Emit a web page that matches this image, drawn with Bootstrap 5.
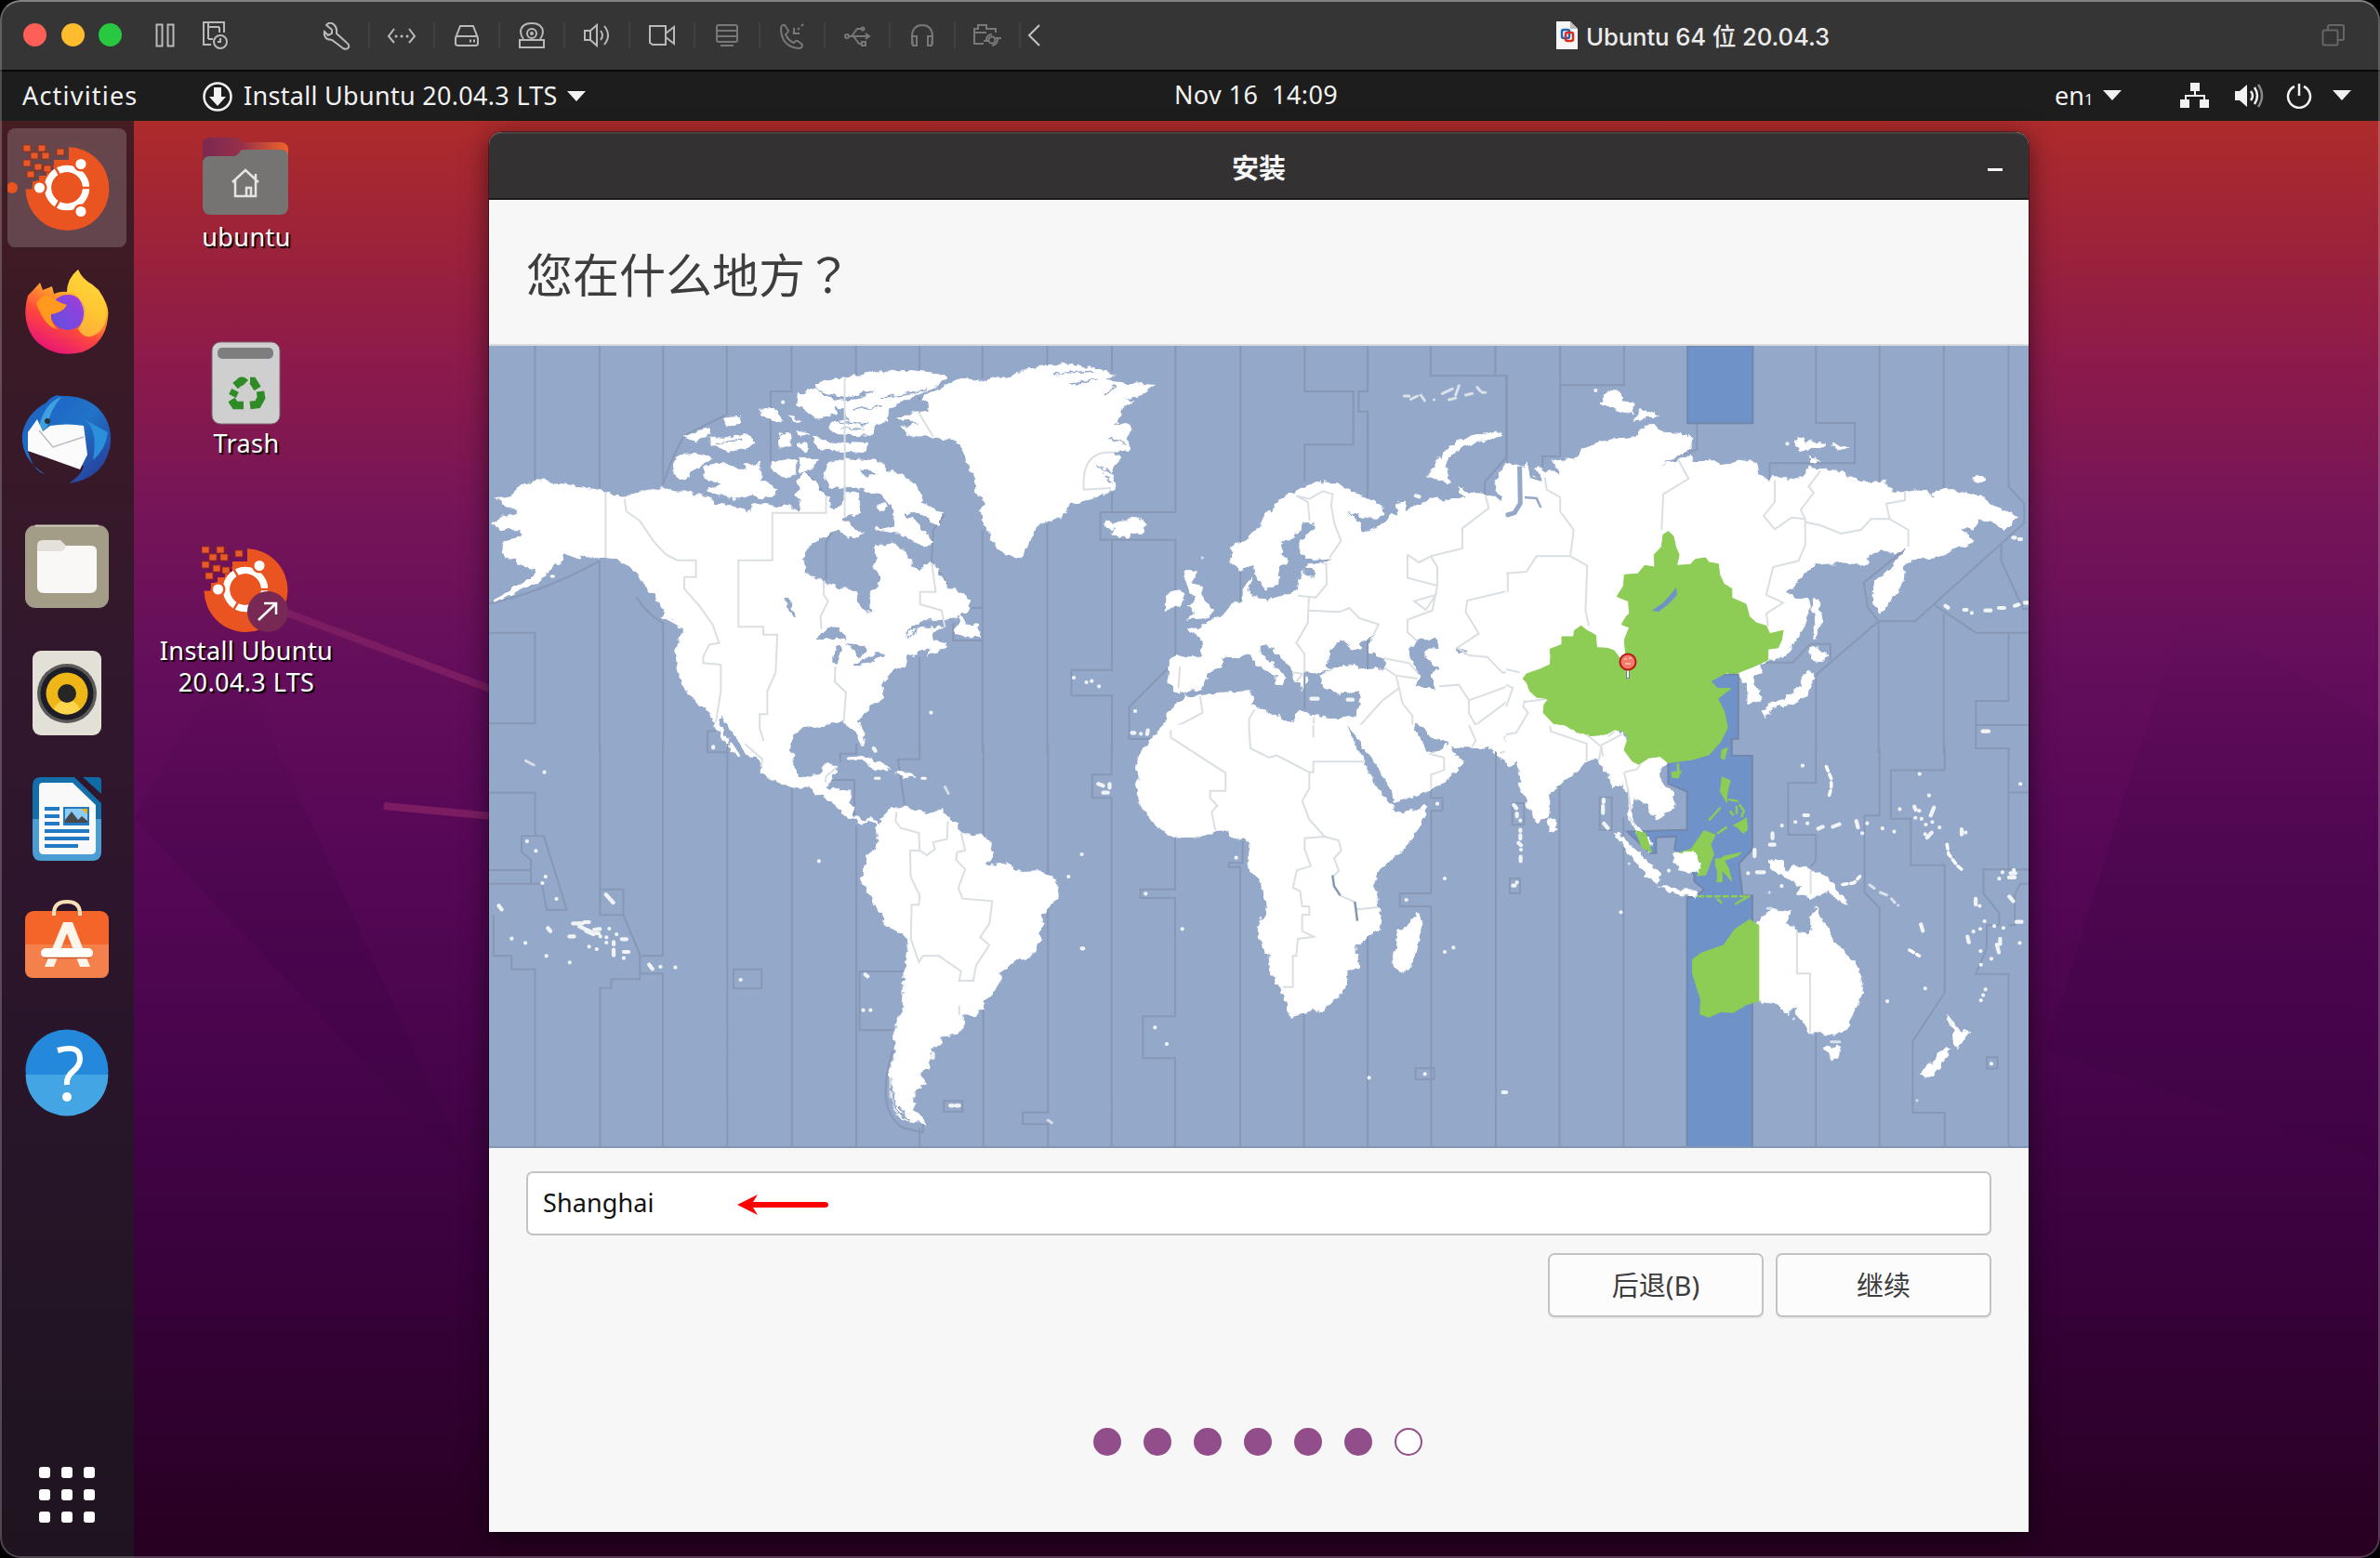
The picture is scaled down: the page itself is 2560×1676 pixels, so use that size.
<!DOCTYPE html>
<html lang="zh-CN">
<head>
<meta charset="utf-8">
<title>Ubuntu 64 位 20.04.3</title>
<link href="https://cdn.jsdelivr.net/npm/bootstrap@5.3.0/dist/css/bootstrap.min.css" rel="stylesheet">
<script src="https://cdn.jsdelivr.net/npm/bootstrap@5.3.0/dist/js/bootstrap.bundle.min.js"></script>
<style>
  html,body{width:2560px;height:1676px;margin:0;overflow:hidden;background:#000}
  body{font-family:"Noto Sans","Noto Sans CJK SC",sans-serif;font-size:27px;line-height:1.2}
  svg{display:block;flex:none}
  .vm{width:2560px;height:1676px;border-radius:22px;background:#1d1d1d}
  .vm-edge{inset:0;border-radius:22px;border:2px solid rgba(255,255,255,.22);border-top-color:#828282;pointer-events:none;z-index:20}
  .mac-bar{height:77px;background:#353535;border-bottom:2px solid #090909;padding-left:25px;padding-right:37px}
  .light{width:25px;height:25px;border-radius:50%}
  .tool{width:70px;height:28px;color:#b9b9b9;border-right:2px solid #414141}
  .tool.off{color:#787878}
  .mac-title{font:500 25.7px Inter,"Noto Sans CJK SC",sans-serif;color:#ebebeb;white-space:pre;letter-spacing:-.1px}
  .stroked{fill:none;stroke:currentColor;stroke-width:2}
  .gnome{height:53px;background:#1d1d1d;color:#f2f2f2;white-space:pre}
  .desk{height:1546px}
  .dock{width:144px;padding:8px 8px 0;gap:7.700px;background:linear-gradient(#451c22 0,#3a1a26 15%,#33182c 35%,#2e162d 50%,#28152a 66%,#1e141f 100%)}
  .dock-item{width:128px;height:128px;border-radius:8px}
  .dock-item.on{background:rgba(255,255,255,.19)}
  .desk-item{width:240px;height:222px;color:#fff;text-shadow:2px 2px 1px #000;font-size:27px;line-height:34px;letter-spacing:.4px}
  .installer{left:526px;top:12px;width:1656px;height:1506px;background:#f7f7f7;border-radius:14px 14px 0 0;box-shadow:0 0 0 1px rgba(0,0,0,.3),0 6px 28px rgba(0,0,0,.55)}
  .dlg-bar{height:73px;background:#333132;border-top:2px solid #454344;border-bottom:2px solid #1c1b1b;border-radius:14px 14px 0 0;color:#f7f7f7;font:700 29px "Noto Sans CJK SC",sans-serif}
  .dlg-head{height:157px;border-bottom:2px solid #dcdcdc;padding-left:40px;font:400 50px/1 "Noto Sans CJK SC",sans-serif;color:#3d3d3d}
  .qmark{font-family:"Noto Sans CJK TC",sans-serif}
  .city{height:69px;border:2px solid #c3c3c3;border-radius:7px;color:#111;font-size:27px;padding:0 16px;background:#fff}
  .dlg-btn{width:232px;height:69px;border:2px solid #c3c3c3;border-radius:7px;background:#fcfcfc;color:#3d3d3d;font:400 29px "Noto Sans","Noto Sans CJK SC",sans-serif;box-shadow:0 2px 0 #ececec;padding:0 0 3px}
  .step{width:30px;height:30px;border-radius:50%;background:#924d8b;border:2px solid #924d8b}
  .step.todo{background:#fff}
  .map path,.map polygon{vector-effect:non-scaling-stroke}
  .land{fill:#fff;stroke:#fff;stroke-width:.8;filter:url(#coast)}
  .sea{fill:#94a8c9;stroke:none;filter:url(#coast)}
  .hot{fill:#6f93c8;stroke:#7186ab;stroke-width:2}
  .sel{fill:#8dcd56;stroke:#8dcd56;stroke-width:1}
  .zl{fill:none;stroke:#8698b5;stroke-width:2}
  .bl{fill:none;stroke:#d9dfe2;stroke-width:2}
  .isl{fill:none;stroke:#f1f4f5;stroke-width:4.2;stroke-linecap:round}
  .thin{fill:none;stroke:#fff;stroke-width:3;stroke-linecap:round;stroke-linejoin:round}
</style>
</head>
<body>
<main class="vm position-relative overflow-hidden d-flex flex-column">
  <div class="vm-edge position-absolute"></div>

  <!-- virtual machine window bar -->
  <header class="mac-bar d-flex align-items-center position-relative flex-shrink-0">
    <div class="d-flex" style="gap:15.5px">
      <span class="light" style="background:#ff5f57"></span><span class="light" style="background:#febc2e"></span><span class="light" style="background:#28c840"></span>
    </div>
    <svg class="stroked" style="color:#b9b9b9;margin-left:36px" width="22" height="26"><rect x="1.500" y="1.500" width="6" height="23"/><rect x="13.500" y="1.500" width="6" height="23"/></svg>
    <svg class="stroked" style="color:#b9b9b9;margin-left:28px" width="30" height="32"><path d="M10 26H2V2H24V13M7 2V20M7 7H19M19 7V13M7 20H12"/><circle cx="20" cy="23" r="7"/><path d="M20 19V23H17"/></svg>
    <div class="d-flex align-items-center" style="margin-left:81px">
      <div class="tool d-flex justify-content-center"><svg class="stroked" width="30" height="30"><path d="M4 3 L10 8 V12 L6 14 L2 10 Q1 15 5 18 L10 19 L22 28 Q26 30 28 27 Q29 24 26 22 L15 12 Q16 4 10 1 Q6 0 4 3Z"/></svg></div>
      <div class="tool d-flex justify-content-center"><svg class="stroked" width="32" height="28"><path d="M8 7 L2 15 L8 22 M24 7 L30 15 L24 22"/><path d="M10 15h.1M16 15h.1M22 15h.1" stroke-linecap="round" stroke-width="3"/></svg></div>
      <div class="tool d-flex justify-content-center"><svg class="stroked" width="28" height="28"><path d="M7 4H21L26 17V23Q26 25 23 25H5Q2 25 2 23V17Z M2 17Q2 15 5 15H23Q26 15 26 17"/><path d="M17 20h2M21 20h2" stroke-width="3"/></svg></div>
      <div class="tool d-flex justify-content-center"><svg class="stroked" width="30" height="30"><path d="M6 18Q3 14 3 10Q4 1 15 1Q26 1 27 10Q27 14 24 18M2 19H28V27H2Z"/><circle cx="15" cy="12" r="5"/><circle cx="15" cy="12" r="1"/></svg></div>
      <div class="tool d-flex justify-content-center"><svg class="stroked" width="30" height="28"><path d="M2 9H8L15 3V25L8 19H2ZM8 9V19M19 9Q23 14 19 19M23 4Q31 14 23 24"/></svg></div>
      <div class="tool d-flex justify-content-center"><svg class="stroked" width="30" height="28"><path d="M2 4H19V24H5L2 22ZM19 12L28 5V23L19 16"/></svg></div>
      <div class="tool off d-flex justify-content-center"><svg class="stroked" width="28" height="28"><rect x="3" y="3" width="22" height="18" rx="2"/><path d="M3 9H25M3 15H25M7 25H21"/></svg></div>
      <div class="tool off d-flex justify-content-center"><svg class="stroked" width="30" height="30"><path d="M3 6Q4 2 7 3L11 9Q11 11 8 13Q11 20 17 22Q19 19 21 20L26 24Q26 28 22 28Q3 26 3 6ZM16 12L18 10M21 8L23 6M25 4L27 2M17 6V12H23"/></svg></div>
      <div class="tool off d-flex justify-content-center"><svg class="stroked" width="30" height="28"><circle cx="4" cy="15" r="2"/><path d="M5 15H28M24 12L28 15L24 18M9 15L15 7H20M11 15L17 23H21"/><circle cx="21" cy="7" r="1.500"/><path d="M20 21h4v4h-4z"/></svg></div>
      <div class="tool off d-flex justify-content-center"><svg class="stroked" width="28" height="28"><path d="M3 24V14Q4 3 14 3Q24 3 25 14V24M3 15H8V25H4ZM25 15H20V25H24Z"/></svg></div>
      <div class="tool off d-flex justify-content-center"><svg class="stroked" width="32" height="28"><path d="M12 23H2V7H6V3H15V7H25V11M2 11H15"/><circle cx="21" cy="19" r="3.500"/><path d="M15 20Q15 13 21 13M27 18Q27 24 21 25M12 20H17M25 17H31"/></svg></div>
    </div>
    <svg class="stroked" style="color:#c5c5c5;margin-left:6px" width="18" height="28"><path d="M14 3L3 14L14 25"/></svg>
    <div class="d-flex align-items-center" style="margin-left:552px;gap:8px">
      <svg width="24" height="30"><path d="M0 0H15L23 8V30H0Z" fill="#f6f6f6"/><path d="M15 0V8H23Z" fill="#bcbcbc"/><rect x="6" y="9" width="8" height="9" rx="2" fill="none" stroke="#1d6bb8" stroke-width="2.500"/><rect x="10" y="12" width="8" height="9" rx="2" fill="none" stroke="#e02b20" stroke-width="2.500"/></svg>
      <span class="mac-title">Ubuntu 64 位 20.04.3</span>
    </div>
    <svg class="ms-auto stroked" style="color:#666" width="26" height="26"><rect x="1.500" y="7.500" width="16" height="16" rx="2"/><path d="M7 7V4Q7 2 9 2H22Q24 2 24 4V17Q24 18 22 18H18"/></svg>
  </header>

  <!-- GNOME top bar -->
  <nav class="gnome d-flex align-items-center position-relative flex-shrink-0">
    <div class="d-flex align-items-center" style="padding-left:24px">
      <span style="width:193px;letter-spacing:1.2px">Activities</span>
      <svg width="34" height="34" viewBox="0 0 34 34"><circle cx="17" cy="17" r="14.500" fill="none" stroke="#f2f2f2" stroke-width="2.500"/><path d="M13 7H21V17H26L17 27L8 17H13Z" fill="#f2f2f2"/></svg>
      <span style="width:348px;margin-left:11px;letter-spacing:.3px">Install Ubuntu 20.04.3 LTS</span>
      <svg width="20" height="12"><path d="M0 0H20L10 11Z" fill="#f2f2f2"/></svg>
    </div>
    <span class="text-center" style="width:240px;margin-left:601px;margin-bottom:2px;letter-spacing:.4px">Nov 16  14:09</span>
    <div class="d-flex align-items-center ms-auto" style="padding-right:31px">
      <span style="width:52px">en<span style="font-size:17px">1</span></span>
      <svg width="20" height="12"><path d="M0 0H20L10 11Z" fill="#f2f2f2"/></svg>
      <svg style="margin-left:63px" width="32" height="28" fill="#f2f2f2"><path d="M11 0H21V9H17V13H27V18H31V27H21V18H25V15H7V18H10V27H0V18H5V13H15V9H11Z"/></svg>
      <svg style="margin-left:27px" width="31" height="28" fill="none" stroke="#f2f2f2" stroke-width="2.500"><path d="M0 9H5L13 2V26L5 19H0Z" fill="#f2f2f2" stroke="none"/><path d="M17 9Q21 14 17 19M21 5Q27 14 21 23"/><path d="M25 2Q33 14 25 26" opacity=".5"/></svg>
      <svg style="margin-left:24px" width="28" height="28" fill="none" stroke="#f2f2f2" stroke-width="2.500"><path d="M9 4A12 12 0 1 0 19 4M14 1V14"/></svg>
      <svg style="margin-left:22px" width="20" height="12"><path d="M0 0H20L10 11Z" fill="#f2f2f2"/></svg>
    </div>
  </nav>

  <section class="desk position-relative d-flex">
    <svg class="position-absolute top-0 start-0" width="2560" height="1546" viewBox="0 130 2560 1546">
      <defs>
        <linearGradient id="wall" x1="0" y1="0" x2="0" y2="1"><stop offset="0" stop-color="#ae2b2b"/><stop offset=".07" stop-color="#9f2437"/><stop offset=".16" stop-color="#8e1b49"/><stop offset=".27" stop-color="#761558"/><stop offset=".38" stop-color="#640e5b"/><stop offset=".5" stop-color="#570857"/><stop offset=".63" stop-color="#4a054d"/><stop offset=".78" stop-color="#3a023e"/><stop offset="1" stop-color="#270021"/></linearGradient>
        <linearGradient id="facet" x1="0" y1="0" x2="0" y2="1"><stop offset="0" stop-color="#2b0035" stop-opacity="0"/><stop offset=".5" stop-color="#2b0035" stop-opacity=".18"/><stop offset="1" stop-color="#2b0035" stop-opacity=".08"/></linearGradient>
        <g id="inst">
          <path d="M66 20 A45 45 0 1 1 19.500 65.500 H27 V57 H34 V51 H42 V45 H50 V34 H66Z" fill="#e95420"/>
          <path fill="#ea5a28" stroke="#8d2c12" stroke-width=".8" d="M17 18h8v7h-8zM33 18h8v7h-8zM53 22h8v7h-8zM25 26h8v7h-8zM37 26h8v7h-8zM17 34h8v7h-8zM29 38h8v7h-8zM39 40h8v7h-8zM21 46h8v7h-8z"/>
          <circle cx="64" cy="64" r="20.500" fill="none" stroke="#fff" stroke-width="7.500"/>
          <g stroke="#e95420" stroke-width="2.500"><path d="M64 64H92M64 64L50 39.800M64 64L50 88.200"/><circle cx="79" cy="38.500" r="6.800" fill="#fff"/><circle cx="34.500" cy="64" r="6.800" fill="#fff"/><circle cx="79" cy="89.500" r="6.800" fill="#fff"/></g>
          <circle cx="64" cy="64" r="16.500" fill="#e95420"/>
        </g>
      </defs>
      <rect y="130" width="2560" height="1546" fill="url(#wall)"/>
      <path d="M144 880L510 1270L250 700Z" fill="url(#facet)"/>
      <path d="M2350 650L2560 780V1250L2200 1130Z" fill="url(#facet)"/>
      <path d="M300 656L530 742M413 867L530 878" stroke="#7c1d63" stroke-width="8" fill="none"/>
    </svg>

    <!-- dock -->
    <aside class="dock d-flex flex-column position-relative flex-shrink-0">
      <div class="dock-item on"><svg width="128" height="128"><circle cx="5" cy="64" r="6" fill="#e95420"/><use href="#inst"/></svg></div>
      <div class="dock-item"><svg width="128" height="128">
        <defs><linearGradient id="ff" x1=".8" y1="0" x2=".3" y2="1"><stop offset="0" stop-color="#ffe24a"/><stop offset=".35" stop-color="#ffab2b"/><stop offset=".65" stop-color="#ff4a3b"/><stop offset="1" stop-color="#e6117a"/></linearGradient><linearGradient id="fp" x1="0" y1="1" x2="1" y2="0"><stop offset="0" stop-color="#5a51e0"/><stop offset="1" stop-color="#a83bdc"/></linearGradient></defs>
        <path d="M22 44 Q28 38 35 30 L38 38 L48 34 L50 42 Q58 39 64 40 Q64 26 76 16 Q80 26 91 32 L98 38 L103 46 Q110 58 108 68 Q105 96 80 105 Q50 112 30 92 Q14 72 22 44Z" fill="url(#ff)"/>
        <circle cx="65" cy="62" r="19" fill="url(#fp)"/>
        <path d="M31 52 Q40 40 48 46 Q56 52 64 54 Q60 62 47 64 Q45 72 54 80 Q40 78 31 52Z" fill="#ff9a1e"/>
        <path d="M64 40 Q64 26 76 16 Q80 26 91 32 L98 38 L103 46 Q112 70 98 84 Q84 94 76 80 Q90 60 72 42Z" fill="#ffd236" opacity=".75"/>
      </svg></div>
      <div class="dock-item"><svg width="128" height="128">
        <defs><linearGradient id="tb" x1="0" y1="0" x2="1" y2="1"><stop offset="0" stop-color="#1b5fc2"/><stop offset=".5" stop-color="#2173c9"/><stop offset="1" stop-color="#28328f"/></linearGradient></defs>
        <path d="M42 24 Q50 14 58 17 Q90 16 104 38 Q114 54 110 74 Q102 106 66 111 Q80 102 82 92 L22 76 Q28 98 40 101 Q14 84 16 58 Q20 36 42 24Z" fill="url(#tb)"/>
        <path d="M34 50 Q40 24 58 18 Q46 32 44 46 Q42 54 36 54Z" fill="#3fa0de"/><circle cx="43" cy="44" r="3" fill="#28323c"/>
        <path d="M82 42 Q98 52 92 86 Q106 74 108 56" fill="#2b8fdc"/>
        <path d="M32 42 L22 56 V76 L78 96 L86 80 L82 49 Q64 46 46 49 L38 55Z" fill="#fbfbfb"/>
        <path d="M34 54L49 72L82 61" fill="none" stroke="#b9bcc0" stroke-width="1.500"/>
      </svg></div>
      <div class="dock-item"><svg width="128" height="128"><rect x="19" y="20" width="90" height="89" rx="11" fill="#a39d88"/><path d="M30 20.500H98" stroke="#d2cdbd" stroke-width="2"/><path d="M32 42Q32 36 38 36H57L63 42V60H32Z" fill="#e3e1da"/><path d="M32 48H57Q61 48 63 42H90Q96 42 96 48V86Q96 93 89 93H39Q32 93 32 86Z" fill="#faf8f7"/></svg></div>
      <div class="dock-item"><svg width="128" height="128"><rect x="27" y="19" width="74" height="91" rx="9" fill="#e3e1d7"/><circle cx="64" cy="65" r="32" fill="#5c5a58"/><circle cx="64" cy="65" r="28.500" fill="#1c1d26"/><circle cx="64" cy="65" r="22.500" fill="#eeb617"/><path d="M50 82Q64 93 78 82Q74 72 64 72Q54 72 50 82Z" fill="#fbd54a"/><circle cx="64" cy="65" r="10" fill="#262626"/></svg></div>
      <div class="dock-item"><svg width="128" height="128"><path d="M36 20H72L101 48V99Q101 110 91 110H37Q27 110 27 100V29Q27 20 36 20Z" fill="#136eaa"/><path d="M27 65H101V99Q101 110 91 110H37Q27 110 27 100Z" fill="#4a9ed3"/><path d="M81 20H97Q101 20 101 24V38Z" fill="#0e6ba5"/><path d="M38 26H70L95 50V98Q95 103 90 103H39Q34 103 34 98V30Q34 26 38 26Z" fill="#f9f9f9"/><path fill="#2379c2" d="M40 52h16v4H40zM40 60h16v4H40zM40 68h16v4H40zM40 76h48v4H40zM40 84h48v4H40zM40 92h36v4H40zM60 52h28v20H60z"/><path d="M62 54H86V69H62Z" fill="#8ccdf5"/><path d="M62 69V66L69 57L76 66L80 62L86 67V69Z" fill="#48494b"/><path d="M79 54h7v6z" fill="#eeb01c"/></svg></div>
      <div class="dock-item"><svg width="128" height="128"><rect x="19" y="28" width="90" height="72" rx="9" fill="#f46529"/><path d="M19 64H109V91Q109 100 100 100H28Q19 100 19 91Z" fill="#f4804b"/><path d="M50 33V29Q51 18 64 18Q77 18 78 29V33" fill="none" stroke="#f7dfb8" stroke-width="4"/><path d="M60 40H70L89 88H78L64 52L50 88H40Z" fill="#fdf5ea"/><rect x="36" y="68" width="56" height="10" rx="5" fill="#fff"/><path d="M39 78.500H89" stroke="#c9572a" stroke-width="1.500"/></svg></div>
      <div class="dock-item"><svg width="128" height="128"><circle cx="64" cy="64" r="44.500" fill="#2489da"/><path d="M19.500 68H108.500A44.500 44.500 0 0 1 19.500 68Z" fill="#44a5e4"/><path d="M54 42Q78 35 78 51Q78 58 71 64Q63 70 64 79" fill="none" stroke="#fff" stroke-width="6"/><circle cx="64" cy="92" r="5" fill="#fff"/></svg></div>
      <svg class="mt-auto" style="margin:0 0 34px 33px" width="64" height="64" fill="#fff"><g id="r"><rect x="1" width="12" height="12" rx="3"/><rect x="25" width="12" height="12" rx="3"/><rect x="49" width="12" height="12" rx="3"/></g><use href="#r" y="24"/><use href="#r" y="48"/></svg>
    </aside>

    <!-- desktop shortcuts -->
    <div class="position-relative d-flex flex-column" style="padding:12px 0 0 1px">
      <div class="desk-item d-flex flex-column align-items-center text-center"><svg width="96" height="96" viewBox="0 0 96 96"><defs><linearGradient id="fo"><stop offset="0" stop-color="#7b2852"/><stop offset=".45" stop-color="#96304a"/><stop offset="1" stop-color="#f0642a"/></linearGradient></defs><path d="M1 30V14Q1 6 9 6H34Q40 6 43 11H86Q93 12 93 19V40H1Z" fill="url(#fo)"/><path d="M1 34Q1 26 9 26H34Q39 26 42 20Q43 19 48 19H86Q93 19 93 27V80Q93 89 84 89H10Q1 89 1 80Z" fill="#757473"/><path d="M33 54L47 41L61 54M36 52V69H58V52M58 50V45M48 69V60H53V69" fill="none" stroke="#e4e4e4" stroke-width="2.500"/></svg><span>ubuntu</span></div>
      <div class="desk-item d-flex flex-column align-items-center text-center"><svg width="96" height="96" viewBox="0 0 96 96"><rect x="11" y="4" width="73" height="88" rx="9" fill="#cfcfcf" stroke="#7b6670"/><rect x="17" y="10" width="60" height="12" rx="5" fill="#7e7e7e"/><g fill="none" stroke="#2e8b25" stroke-width="8.500"><path d="M36 51L41 47Q43 44 47 48M52 46H55L60 54M63 57L64 64L60 71L52 72M45 72L36 72L32 66M33 62L36 56"/></g></svg><span>Trash</span></div>
      <div class="desk-item d-flex flex-column align-items-center text-center"><svg width="96" height="97" viewBox="17 16 96 97"><use href="#inst"/><circle cx="88" cy="88" r="22" fill="#772953"/><path d="M78 97L97 79M84 79H97V91" fill="none" stroke="#fff" stroke-width="2.500"/></svg><span>Install Ubuntu<br>20.04.3 LTS</span></div>
    </div>

    <!-- installer window -->
    <div class="installer position-absolute d-flex flex-column">
      <div class="dlg-bar position-relative d-flex align-items-center justify-content-center flex-shrink-0"><span>安装</span><svg class="position-absolute" style="right:28px;top:37px" width="16" height="4"><rect width="16" height="3" fill="#f7f7f7"/></svg></div>
      <div class="dlg-head d-flex align-items-center flex-shrink-0">您在什么地方<span class="qmark" lang="zh-TW">？</span></div>

      <!-- time zone map -->
      <svg class="map" width="1656" height="863" viewBox="526 372 1656 863">
        <defs><filter id="coast" x="-5%" y="-5%" width="110%" height="110%" color-interpolation-filters="sRGB"><feTurbulence type="fractalNoise" baseFrequency=".045" numOctaves="2" seed="4" result="n"/><feDisplacementMap in="SourceGraphic" in2="n" scale="24" xChannelSelector="R" yChannelSelector="G"/></filter></defs>
        <rect x="526" y="372" width="1656" height="863" fill="#94a8c9"/>
        <g transform="translate(520 370) scale(.357143 .333333)">
          <path class="zl" d="M155 0V440M350 0V480M541 0V455M733 0V228L605 295Q565 370 541 455M928 0V153H865V380M1122 0V100M1313 0V180M1503 0V110M18 932H155V1225H18M350 700V1320M541 900V1320M350 700Q180 800 18 838M460 815Q490 870 541 900M700 1249H675V1320M1313 1010V1320M1503 600V957H1415V900M1470 852H1503V1320M1355 600L1350 700L1400 780M960 400L1032 490M1075 560L1032 640V760M1390 550L1355 600"/>
          <path class="land" d="M165 437L200 450L240 455L280 463L345 470L370 480L425 497L455 480L500 472L530 470L545 462L570 480L620 480L680 495L700 520L760 525L785 530L800 550L805 525L830 515L870 522L920 525L950 548L960 520L940 490L955 470L945 440L965 415L1000 440L1010 475L1035 490L1050 530L1080 525L1085 480L1130 485L1135 540L1105 555L1080 560L1100 580L1145 615L1100 625L1070 600L1040 615L1000 635L975 660L965 690L965 725L990 755L1025 765L1060 785L1120 797L1125 830L1150 868L1168 865L1165 800L1190 780L1195 745L1175 715L1185 690L1180 650L1240 645L1280 680L1290 715L1315 735L1345 700L1370 730L1390 775L1430 800L1460 825L1460 855L1420 885L1370 890L1320 890L1290 910L1270 945L1300 920L1340 915L1385 912L1350 935L1355 960L1400 968L1375 985L1340 1005L1345 980L1310 990L1280 1010L1270 1040L1235 1050L1200 1095L1205 1140L1150 1185L1130 1215L1150 1290L1140 1295L1115 1245L1090 1225L1050 1220L1020 1235L975 1230L935 1255L920 1300L915 1330H800L770 1280L715 1200L705 1210L725 1260L760 1320H745L700 1230L670 1175L635 1155L600 1105L585 1050L580 1000L590 945L600 940L605 920L560 885L535 880L545 860L515 815L490 790L465 740L440 715L390 695L330 688L280 685L250 670L225 710L185 740L165 770L110 795L35 828L100 780L140 760L165 725L120 725L95 695L65 690L50 660L60 635L110 625L115 600L50 597L25 575L50 560L110 550L85 525L60 520L40 500L85 490L110 460Z"/>
          <path class="land" d="M1440 870L1455 905L1490 910L1500 950L1420 935ZM1085 375L1185 375L1220 410L1270 425L1320 485L1320 510L1385 545L1365 590L1320 545L1260 545L1310 580L1350 640L1340 655L1300 640L1250 610L1180 600L1235 585L1240 560L1230 530L1200 485L1150 470L1110 460L1040 465L1025 430L1040 380ZM1190 515L1215 520L1205 540L1188 532ZM660 400L700 385L750 395L790 410L785 390L832 385L840 440L885 470L860 500L810 490L760 500L720 490L670 470L720 455L665 430ZM580 360L640 355L690 370L630 410L600 440L570 415ZM600 300L680 270L685 285L640 315ZM680 300L735 305L790 290L820 325L740 350L690 325ZM720 240L775 235L765 260L730 265ZM830 210L880 215L905 250L850 240ZM920 230L960 250L930 250ZM890 290L925 290L930 330L890 330ZM870 380L940 370L940 420L900 430L865 400ZM950 370L1015 370L990 400L955 415ZM945 318L975 325L975 345L945 335ZM940 280L980 290L950 295ZM990 295L1040 318L1155 322L1150 350L1060 345L1010 340ZM1000 130L1100 105L1180 90L1280 85L1370 95L1395 110L1340 150L1270 180L1220 215L1215 245L1180 260L1170 295L1060 290L1040 265L1090 240L1060 225L1000 240L945 195L950 165L985 145L1060 165L1010 150Z"/>
          <path class="land" d="M1400 128L1450 110L1500 125L1540 105L1568 115L1640 80L1700 70L1760 65L1830 75L1900 102L1870 118L1925 125L2023 133L1990 160L1930 178L1960 185L1930 200L1910 245L1948 270L1938 310L1945 340L1898 350L1918 370L1893 400L1898 460L1888 475L1828 505L1768 515L1743 555L1698 575L1668 580L1648 630L1633 660L1618 695L1578 680L1560 670L1530 630L1510 590L1495 540L1510 510L1480 480L1480 440L1465 400L1450 350L1420 310L1355 300L1295 300L1255 270L1320 255L1245 240L1290 225L1340 215L1345 185L1315 180L1340 160Z"/>
          <path class="thin" d="M545 880L600 912M185 745L35 828M205 750h6M1400 820L1440 825M250 675L290 690"/>
          <path class="sea" d="M1000 950L1040 915L1070 918L1095 955L1060 950L1020 955ZM1060 975L1078 972L1066 1040L1050 1030ZM1095 965L1150 975L1150 1000L1130 1015L1115 985ZM1115 1040L1180 1000L1205 1000L1185 1018L1130 1042ZM905 820L920 818L942 882L932 880ZM1000 150L1090 172L1190 145L1130 178L1060 182ZM1060 200L1085 210L1100 250L1070 235ZM1140 400L1190 420L1150 425Z"/>
          <path class="sea" style="fill:none;stroke:#94a8c9;stroke-width:1.500" d="M1190 175L1330 150M1220 215L1390 130M1110 215L1200 200M1050 250L1160 262M1765 130L1850 115M1720 95L1840 88M1870 165L1905 130M1085 270L1150 275M440 720L500 800M430 740L500 810M1280 945L1330 905L1380 900M900 290L870 330M700 320L780 310M1900 260L1940 250M1850 395L1900 420M1880 300L1930 320M1870 420L1890 450"/>
          <path class="bl" d="M368 480V690M425 500L430 540L470 570L515 640L550 680L585 698H640V752H605V790L650 845L690 905L710 965L680 970L662 1010V1030L715 1035V1120L700 1220M1032 490V545H870V698H768V913H843V938H885L880 1060L855 1120V1195H832V1240L845 1285L805 1290V1320M1025 765V810L1038 830L1015 880L1018 920M1060 1040L1058 1090L1092 1125L1085 1220M1350 705L1362 800H1315V840L1380 860L1390 915M1088 110V560M1310 220L1355 300M1900 350Q1800 340 1808 470L1890 465"/>
          <path class="isl" d="M1348 1190h.1M692 1300h.1M902 188h.1M755 500h.1"/>
        </g>
        <g transform="translate(1080 370) scale(.357143 .333333)">
          <path class="zl" d="M130 0V70M130 580V1320M325 0V90M325 480V540M325 632V1052H203V1135H325V1320M516 0V543H290V632H516V1010M495 1045L377 1172V1275H440M712 0V640M712 730V830M905 0V153H1052V325H905V445M1095 0V153H1068V218H1095V495M1285 0V103H1513V365L1448 445V490M1480 0V103"/>
          <path class="land" d="M685 655L720 640L760 600L790 555L830 505L870 480L905 460L945 445L1000 450L1050 480L1095 495L1140 525L1145 550L1110 565L1030 540L1070 575L1080 610L1135 590L1165 550L1190 555L1180 515L1210 510L1205 540L1250 520L1290 495L1330 505L1390 500L1365 460L1400 480L1450 485L1500 505L1475 455L1500 400L1520 385L1568 400V1330H412L440 1275L485 1240L490 1195L535 1150L545 1130L510 1115L495 1085L500 1010H590L600 965L585 940L555 925L590 915L620 895L665 870L680 840L720 828L720 780L745 750L735 800L745 820L795 825L850 810L885 795L890 760L910 715L975 705L990 692L910 695L890 660V635L935 600V575H900L890 610L835 645V680L855 700L830 725L825 775L785 790L765 760L750 710L715 735L690 715Z"/>
          <path class="land" d="M300 570L330 580L410 560L435 585L410 610L370 625L330 615L335 598L305 590ZM550 730L585 735L565 765L590 780L595 800L610 840L632 855L620 880L550 888L575 865L555 845L578 828L555 790L545 755ZM490 815L510 795L540 800L535 840L485 862ZM1480 283L1498 295L1380 330L1340 365L1330 405L1345 450L1310 440L1275 425L1300 390L1320 350L1380 305Z"/>
          <path class="sea" d="M540 1128L600 1108L612 1068L655 1040V1012L705 1015L738 998L760 1035L820 1070L818 1095L835 1100L850 1075L810 1035L775 1000V970H790L860 1040L880 1090L905 1120L915 1085L905 1060L945 1060L990 1052L950 1070L965 1110L1010 1130L1075 1120L1060 1200L1000 1210L920 1195L885 1185L865 1220L810 1195L750 1165L745 1120L640 1125L590 1135L545 1140ZM970 1045L985 985L1015 955L1045 985L1075 990V965L1115 945L1090 985L1145 1020V1045L1090 1050L1030 1035L985 1050ZM1240 955L1295 950L1310 980L1265 985L1270 1010L1310 1050L1285 1065L1305 1115L1245 1105L1250 1070L1225 1020L1218 985ZM1235 1225L1265 1235L1285 1270L1340 1280L1350 1300H1470L1485 1335H1340L1330 1290L1305 1320L1270 1310L1235 1245ZM1030 1230L1060 1265L1100 1335H1070L1045 1270ZM1500 553L1545 545L1568 510V550L1530 562ZM905 720L935 730V755L905 745ZM1363 985L1390 985V1000L1365 992Z"/>
          <path class="zl" d="M905 1060V1180M1095 955V1050"/>
          <path class="bl" d="M880 490L915 510L920 570M880 490L920 500L960 475L990 485L985 520L995 580L1015 635L980 690M970 705L972 775L940 818L885 812M918 818L915 900L880 965L905 1000V1060M918 860L1010 865L1040 852L1070 885L1128 905L1110 945M1450 490L1460 530L1380 595V660L1285 685L1305 720V780L1290 860L1215 890V930L1245 960M1215 680L1250 705L1285 685M1215 680V755L1305 780M1235 830L1300 810L1270 858ZM1568 735H1525V795L1395 828L1390 865L1430 935L1365 980L1400 1005L1455 1010L1500 1060L1568 1075M1145 1015L1220 1030L1245 1060M1145 1045L1180 1070L1245 1080M1180 1070L1190 1110L1140 1150L1060 1245M1190 1110L1200 1160L1230 1200V1230M1310 1105L1370 1100L1400 1150L1530 1100L1520 1150L1420 1230L1400 1190V1150M1420 1230L1420 1300M1568 1200L1510 1240L1525 1320M590 1135L598 1190L500 1245L575 1320M755 1180L738 1210V1290L760 1320M933 1205V1275M530 1040L525 1110M870 1060L900 1065L880 1090M1500 1060H1568"/>
          <path class="isl" d="M210 1077h.1M248 1092h.1M264 1088h.1M286 1105h.1M395 1185h.1M385 1255h8M412 1258h.1M433 1247l-2 12M925 1145h20M1035 1148h15M1240 490l10 3"/>
          <path class="isl" style="stroke-width:3;opacity:.75" d="M1205 168h15M1225 178l20-10M1255 165l12 18M1320 160l30-15M1340 180l20-5M1370 135l-10 30M1390 165l20-5M1425 140l10 12M1440 157h10M1295 180h.1M597 690h.1"/>
        </g>
        <g transform="translate(520 800) scale(.433673 .333333)">
          <path class="zl" d="M14 158H128V298M14 408H118M95 298H150L207 537H157L145 452H14M95 298V350L118 375V452M289 0V470H347V553H289V470M347 553L388 680V760H317V788H289V1305M445 0V685H388M388 742H445V1305M25 553V685H70V728H128V1305M605 0V1305M765 145V1305M925 0V32H885V60M925 265V1305M1082 0V50H1028L1045 200M1082 1240V1305M1240 0V1305M1400 0V1190H1338V1228H1400V1305M1558 0V100H1510V175H1558V1305M620 728H690V790H620ZM1050 735H933V925H1015M1142 1153H1188V1187H1142ZM860 117H920V240M555 0V28H605M1015 990Q970 1180 1040 1240L1090 1255V1225"/>
          <path class="land" d="M635 -10L690 60L685 90L720 120L770 145L800 138L830 165L870 185L890 225L920 245L940 262L955 245L975 262L980 320L950 365L938 440L965 500L995 580L1050 625L1055 660L1045 730L1040 850L1018 925L1020 1010L1008 1060L1015 1150L1025 1200L1060 1222L1098 1226L1065 1180V1140L1098 1095L1080 1065L1105 1045L1110 980L1130 980L1135 945L1175 940L1195 910L1180 875L1225 878L1250 820L1280 780L1285 735L1320 700L1355 690L1380 635L1385 555L1425 490V450L1380 410L1330 412L1290 385L1250 390L1265 350L1240 295L1195 290L1155 240L1140 215L1110 225L1070 215L1050 200L1005 215L980 260L960 238L945 245L915 235L910 150L855 148L865 100L878 70L845 68L835 100L785 110L765 70L760 -10ZM905 48L940 40L980 60L1005 82L985 88L940 55ZM1025 95L1055 92L1070 105L1040 112Z"/>
          <path class="thin" d="M614 0L633 38M972 112h10M1088 112h8M905 48L940 45L1000 84"/>
          <path class="bl" d="M648 0L692 50L688 75M878 75L850 105L848 125M1025 220L1022 250L1035 272L1080 288L1082 345H1058L1060 430L1082 490L1080 520H1062L1060 630L1080 705L1090 685H1130L1185 735L1180 765H1215L1222 715L1255 650L1232 625L1255 580L1262 508L1188 500L1178 465L1195 405L1172 375L1175 350L1195 345L1185 290M1082 345L1100 360L1120 340L1115 318L1150 308L1152 250M1180 845V875"/>
          <path class="isl" d="M151 92h.1M108 315h.1M130 346h.1M154 429h.1M146 450h.1M181 501h.1M304 487l18 26M38 523l7 12M160 595l6 10M70 629h.1M104 643h.1M156 685h.1M214 706h.1M222 580h24M238 590l30 18M250 576h12M255 605l18 10M275 600l14-2M290 622h.1M312 597h.1M330 615h.1M305 625h.1M213 622h12M262 655h.1M281 663h.1M305 642h.1M323 640v8M323 665v18M343 631h12M348 672h12M348 692h.1M411 713l8 14M439 720h.1M476 722h.1M638 762h.1M947 745l6 6M942 860h.1M960 860h.1M832 379h.1M1484 357h.1M1451 429h.1M1484 661h4M1158 1168h6M1172 1168h8M1525 130l12 6M1553 130v12M1537 158h12M940 3h.1M968 15l4 8M570 13h.1M1115 1000v14M278 612h8"/>
          <path class="isl" style="stroke-width:3;opacity:.7" d="M1400 1215l10 8M1010 1080v60M1020 1180l20 25M1030 1195h30M1145 140l8 20M105 55l20 14"/>
          <path class="sea" style="fill:none;stroke:#94a8c9;stroke-width:2" d="M1012 1100L1025 1190L1060 1215M1030 1170L1045 1200M1250 385L1275 392"/>
        </g>
        <g transform="translate(1180 780) scale(.333333)">
          <path class="zl" d="M252 360V530H140V558H252V940H148V1075H252V1365M470 375V445H425V458H462V1365M668 920V1365M873 680V1365M1078 205V235H1115V277H1078V543H977V585H1078V1365M1287 80V1365M1340 252H1378V322H1340ZM1332 495H1365V543H1332ZM1028 1107H1088V1143H1028Z"/>
          <path class="land" d="M220 0L175 45L125 120L135 170L125 220L145 260L185 320L250 368L290 358L330 360L375 345L420 340L440 368L485 370L495 385L485 455L525 500L540 545L548 595L520 650V690L555 745L560 800L590 845L610 905L615 930L630 938L670 928L735 918L800 850L808 795L845 780L835 712L910 660L915 620L905 560L893 510L915 465L1005 385L1035 335L1060 290V265L965 285L950 255L905 210L870 145L860 110L825 50L805 0ZM835 0H1020L1045 50L1065 90H1090L1110 85L1130 60L1145 85L1180 115L1160 150L1120 185L1080 205L1020 230L960 250L945 200L900 130L870 75L835 20ZM1050 0L1085 45H1140L1150 65L1205 70H1270L1300 95L1330 135L1355 115L1365 190L1390 260L1425 315L1455 290L1460 210L1500 190V0ZM1035 603L1050 645L1030 720L1010 785L980 797L958 780L955 740L970 700L965 665L1000 655ZM1455 305L1470 300L1485 335L1465 345Z"/>
          <path class="bl" d="M238 15V40L415 155V212H365V235L388 260L370 280L382 340M490 0L495 75L555 105L580 98L685 152H698V118H865M685 152V205L662 245L685 305L735 360L780 372L788 405L765 430L780 470L760 490M735 360L670 365V400L690 455L645 468L632 525L655 535L662 585H685V612H662V665L700 683L648 690L643 745H632V845H600M785 550L830 570L838 595L905 588M1072 92L1120 105V145L1078 160V205M698 0V40M1200 0L1222 50L1210 70M1365 0L1315 40L1335 80L1300 90M1460 0L1500 30"/>
          <path style="fill:none;stroke:#8398b4;stroke-width:2.500" d="M760 485L765 520L785 550M832 570L840 632"/>
          <path class="isl" d="M157 544h.1M275 658h.1M187 976h.1M225 1029h.1M449 428h.1M878 1138h.1M1058 1126h.1M998 564h.1M1122 495h.1M1122 732h.1M1150 718h.1M1345 258l8 10M1355 285v10M1366 308h.1M1366 338v4M1366 355v12M1360 380l8 8M1368 402h.1M1367 425v14M1342 518h6M1355 508h.1M1310 1185h10M1098 254h.1"/>
        </g>
        <g transform="translate(1620 370) scale(.363520 .333333)">
          <path class="zl" d="M2 100V380M160 0V362H108V400M349 0V133H160M565 257V340L510 360M917 0V255H1032V385H780V440M1105 0V450M1295 0V475M1487 0V460L1533 515V578L1210 895H1102L1070 850L1058 770L1190 655M1465 640V700L1530 855H1545M1265 840L1390 932H1545M1295 870V1320M1102 895V1320M1102 895L917 1068V1320M765 1028H848L900 968H960V1020M1487 932V1152H1390V1305H1487V1320M1390 1230H1545"/>
          <rect class="hot" x="537" y="6" width="193" height="250" vector-effect="non-scaling-stroke"/>
          <path class="land" d="M0 390L35 395L50 400L60 380L75 430L110 440L85 400L160 420L135 375L205 375L225 340L310 308L390 300L410 265L440 262L460 285L530 290L553 315L540 345L450 395L510 375L545 360L550 385L610 375L640 390L675 388L685 375L740 385L745 420L780 445L790 428L875 435L890 400L990 410L1050 445L1120 445L1140 475L1240 470L1260 498L1275 470L1330 470L1400 490L1460 530L1515 560L1480 600L1430 570L1400 565L1380 600L1345 595L1380 640L1330 660L1270 690L1210 695L1180 710L1175 770L1140 830L1102 872L1085 830L1090 770L1150 710L1190 655L1145 680L1105 660L1070 690L1065 715L1000 705L915 712L830 800L865 825L890 820L900 850L880 920L820 1015L780 1020L750 1035L755 1060L730 1080L750 1120V1150L715 1158V1105L695 1080L680 1065L500 1100L300 1200L370 1320H0Z"/>
          <path class="land" d="M285 180L300 150L345 155V185L380 190L375 225L330 215L275 192ZM375 250L400 210L450 230L400 245ZM852 312L875 305L885 325L900 315L945 318L940 335L890 335L870 345ZM965 325L1020 335L1000 345ZM890 362L930 380L905 382ZM1380 440L1400 430L1420 438L1400 447ZM910 820L925 830L938 905L920 910V955L910 950L915 880L905 850ZM905 975L925 985L955 1005L930 1025L900 1020ZM888 1060L910 1065L905 1100L890 1140L840 1165L770 1178L780 1160L830 1140L870 1105ZM758 1180L782 1175L770 1208Z"/>
          <path style="fill:none;stroke:#94a8c9;stroke-width:5" d="M40 395L42 515L25 545L0 553"/>
          <path style="fill:none;stroke:#94a8c9;stroke-width:2.500" d="M55 495L90 498L103 528M65 375L75 430L105 440"/>
          <path class="bl" d="M115 430L120 470L160 495V540L200 600L190 685H90L60 735L0 740M190 685L240 715L235 860L245 910M510 375L540 435L465 485L460 600M795 440V510L762 555L795 598L845 560L885 565L872 535L910 480L895 460L930 410M885 565V650L865 700L790 720L770 810L820 835L770 870L775 910M885 575L930 585L990 612L1050 600L1080 565H1135L1125 515L1180 505V475M1135 565L1190 600V655M0 1050L40 1060M55 1150L50 1170L65 1190L30 1255L0 1260M125 1145L55 1155M130 1230L130 1250L235 1285L240 1320M235 1265L280 1290L320 1250M0 1100L20 1110L0 1170M5 740V800"/>
          <path class="sel" d="M480 605L495 620L502 655L512 680L505 715L545 712L560 695L590 690L600 705L628 710L632 745L645 775L668 790V820L690 830L710 840L720 880L740 900L770 910L780 935L800 930L820 925L815 955L805 980L775 985V1020L735 1040L700 1055L665 1072L655 1060L605 1085L625 1110L665 1112L640 1125L625 1145L645 1170L655 1200L650 1260L630 1290L605 1325H355L365 1275L345 1248L320 1245L300 1258L280 1262L245 1265L210 1255L175 1230L140 1225L110 1190L112 1165L125 1145L90 1140L70 1120L62 1095L50 1080L60 1065L100 1050L130 1035L132 1010L130 985L165 970V945H200L202 925L222 910L240 925L265 940L268 980L300 982L320 990L335 1012L355 1015L350 955L365 915L342 905L355 880L365 870L362 830L328 815L348 780L350 745L390 742L410 715L440 720L438 680L460 655L465 615Z"/>
          <path fill="#6f93c8" d="M503 785L506 810L480 840L450 865L432 860L465 835L490 805Z"/>
          <path class="isl" d="M1300 845l8 6M1355 858h8M1378 868h.1M1418 860h16M1458 852h16M1505 845l12-4M1535 835h8M1410 1250h18M1500 625h6M1518 630h6M832 322h.1M265 150h.1"/>
        </g>
        <g transform="translate(1640 700) scale(.350765 .344388)">
          <path class="zl" d="M893 300V413H808V575H893V655L877 675M893 1195V1555M1088 300V515H1042V755L1088 803V1555M1288 300V373H1123V525H1184V670H1288V1068L1190 1220V1443H1288V1555M1484 303V680M1484 443H1545M1545 683H1407V758L1455 820V857H1417V930L1383 1010H1484V1555M1484 857H1503V760L1520 728H1545M107 400V1555M303 520V1555M230 458H267V560H230ZM1417 1270H1450V1305H1417Z"/>
          <path class="hot" d="M575 75H655V275H635V328H698V620L657 665L668 765H698V1553H498V770L525 768L550 745L520 720V700L460 620L465 580L403 583V632H385L315 565L498 560V440L440 415V340L500 300Z"/>
          <path class="land" d="M0 250V450L40 538L70 500L78 435L165 375L190 345L228 340L240 375L262 385L270 430L305 415L320 460L318 530L345 565L385 630L390 600L340 540L325 520L335 460L375 480L405 525L455 495L458 450L410 395L415 370L440 350L430 325L340 300L300 262L200 275L100 230Z"/>
          <path class="sel" d="M280 100L605 66L628 64L570 95L592 118L632 118L592 150L612 190L622 240L600 285L565 325L515 340L440 350L415 330L380 335L350 355L330 345L305 310L318 270L315 258L275 240L240 258L190 262L120 230L100 160Z"/>
          <path class="land" d="M275 570L300 580L370 650L415 690L412 725L380 710L330 645ZM412 735L460 740L530 755L528 768L440 755ZM700 860L735 825L770 810L815 815L800 850L865 890L880 870V830L893 795L905 840L930 855L945 910L975 930L1000 970L1025 995L1037 1050L1025 1100L995 1150L988 1190L945 1200L870 1195L860 1165L830 1130L835 1110L805 1137L780 1105L718 1092H700ZM920 1238H970L965 1270L945 1280ZM1295 1140L1315 1165L1335 1190L1362 1188L1345 1220L1325 1245L1310 1210L1320 1190ZM1290 1238L1308 1245L1270 1305L1240 1332L1210 1320L1250 1285ZM745 655L785 660L800 690L825 672L875 685L930 710L960 750L995 790L970 785L930 750L885 772L835 760L845 735L795 705L765 690ZM75 520L98 540L92 565L75 562Z"/>
          <path class="sel" d="M340 562L370 570L390 630L360 615ZM470 632L510 620L550 562L585 575L570 605L580 635L555 700L530 703L540 660L500 635ZM585 650L600 650L612 642L665 630L655 640L612 655L625 680L635 720L605 685V722H590L592 690L585 670ZM605 395L630 405L620 450V475L600 440ZM640 545L660 535L680 522L683 560L670 570L650 550ZM605 310L622 303L612 340L602 335ZM450 380L480 375L470 398L452 395ZM690 840L718 858V1095L680 1105L640 1130L600 1128L565 1145L538 1135L540 1090L515 1010V965L540 945L610 920L645 870Z"/>
          <path class="land" d="M455 630L520 632L540 665L530 695L470 685Z"/>
          <path style="fill:none;stroke:#8dcd56;stroke-width:2.500" d="M565 530L600 490M625 465L655 470M650 485V510M630 500L640 515M658 480L672 500L665 520M645 792L690 765M590 775L605 788M470 352V375M590 572L620 550"/>
          <path style="fill:none;stroke:#8dcd56;stroke-width:2.500;stroke-dasharray:7 2" d="M530 767H690"/>
          <path class="bl" d="M835 875V1008H875V1195M877 685V760M305 380L345 370L355 355M305 380L318 440L325 500M78 235L80 252L190 290L190 345M190 262L235 300L228 340M235 295L300 260M235 300L240 330M340 545L320 520"/>
          <path class="thin" style="stroke-width:3.500;stroke-dasharray:5 4" d="M975 730L1010 725L1028 705M925 362L940 400V430L932 458M1295 605L1300 635L1325 670L1348 690M1180 935L1210 953"/>
          <path class="isl" d="M852 359h.1M1211 385h.1M1240 452h.1M1150 495h.1M1520 416h.1M1195 487l4 10M1198 522h.1M1210 500h.1M1217 525h.1M1230 543h.1M1255 490l-10 25M1250 535h.1M1272 552h.1M1248 568l-14 16M1228 573h.1M1340 558v16M1352 568h.1M1097 555h.1M1133 565h.1M1017 532l5 20M1035 570h.1M1050 539h.1M830 535h.1M857 514h12M867 539h.1M789 546h.1M900 556l14-6M945 550l20-8M760 570v16M752 606h14M705 622v20M685 695h.1M712 692h22M1455 712h.1M1465 692h.1M1485 708h18M1490 695h15M1500 685v8M1486 768l12 14M1383 775v18M1395 797h.1M1410 845h.1M1440 860h.1M1468 866h.1M1508 847h16M1397 869h.1M1376 877h.1M1358 893l4 18M1398 938h.1M1458 900v16M1448 918l6 24M1431 962h.1M1518 913h.1M1399 981h.1M1413 1058h.1M1406 1076h.1M1399 1092h.1M1228 1055h.1M1112 1095h.1M1431 1290h.1M242 465v8M240 485v22M243 540l12 14M1215 855l6 20M788 735h.1M295 817h.1M442 687h.1M1300 1150l12 15"/>
          <path class="isl" style="stroke-width:3;opacity:.75" d="M1058 732l14 10M1090 755l20 8M1125 775l10 12M1145 795h.1M745 805h12M750 755h.1M825 1150h.1M320 665h.1M1203 1405h.1M940 1222h26"/>
        </g>
        <!-- selected location -->
        <path d="M1751 718V730" stroke="#77808a" stroke-width="4"/><path d="M1751 720V729" stroke="#f4f4f4" stroke-width="2"/>
        <circle cx="1751" cy="712" r="8.500" fill="#f47a6c" stroke="#b81a14" stroke-width="2"/><path d="M1747 709h3M1752 708h3M1748 714h6" stroke="#ffc3b8" stroke-width="1.500"/>
        <path d="M526 1234H2182" stroke="#8295b3" stroke-width="2"/>
      </svg>

      <div class="d-flex flex-column" style="padding:25px 40px 0;gap:19px">
        <div class="city position-relative d-flex align-items-center"><span style="letter-spacing:.1px">Shanghai</span>
          <svg class="position-absolute" style="left:225px;top:23px" width="100" height="22"><path d="M0 11L22 0L17 8H94Q98 8 98 11Q98 14 94 14H17L22 22Z" fill="#f00"/></svg>
        </div>
        <div class="d-flex justify-content-end" style="gap:13px"><button class="btn dlg-btn">后退(B)</button><button class="btn dlg-btn">继续</button></div>
      </div>
      <div class="d-flex justify-content-center" style="gap:24px;margin-top:119px;padding-right:3px">
        <span class="step"></span><span class="step"></span><span class="step"></span><span class="step"></span><span class="step"></span><span class="step"></span><span class="step todo"></span>
      </div>
    </div>
  </section>
</main>
</body>
</html>
